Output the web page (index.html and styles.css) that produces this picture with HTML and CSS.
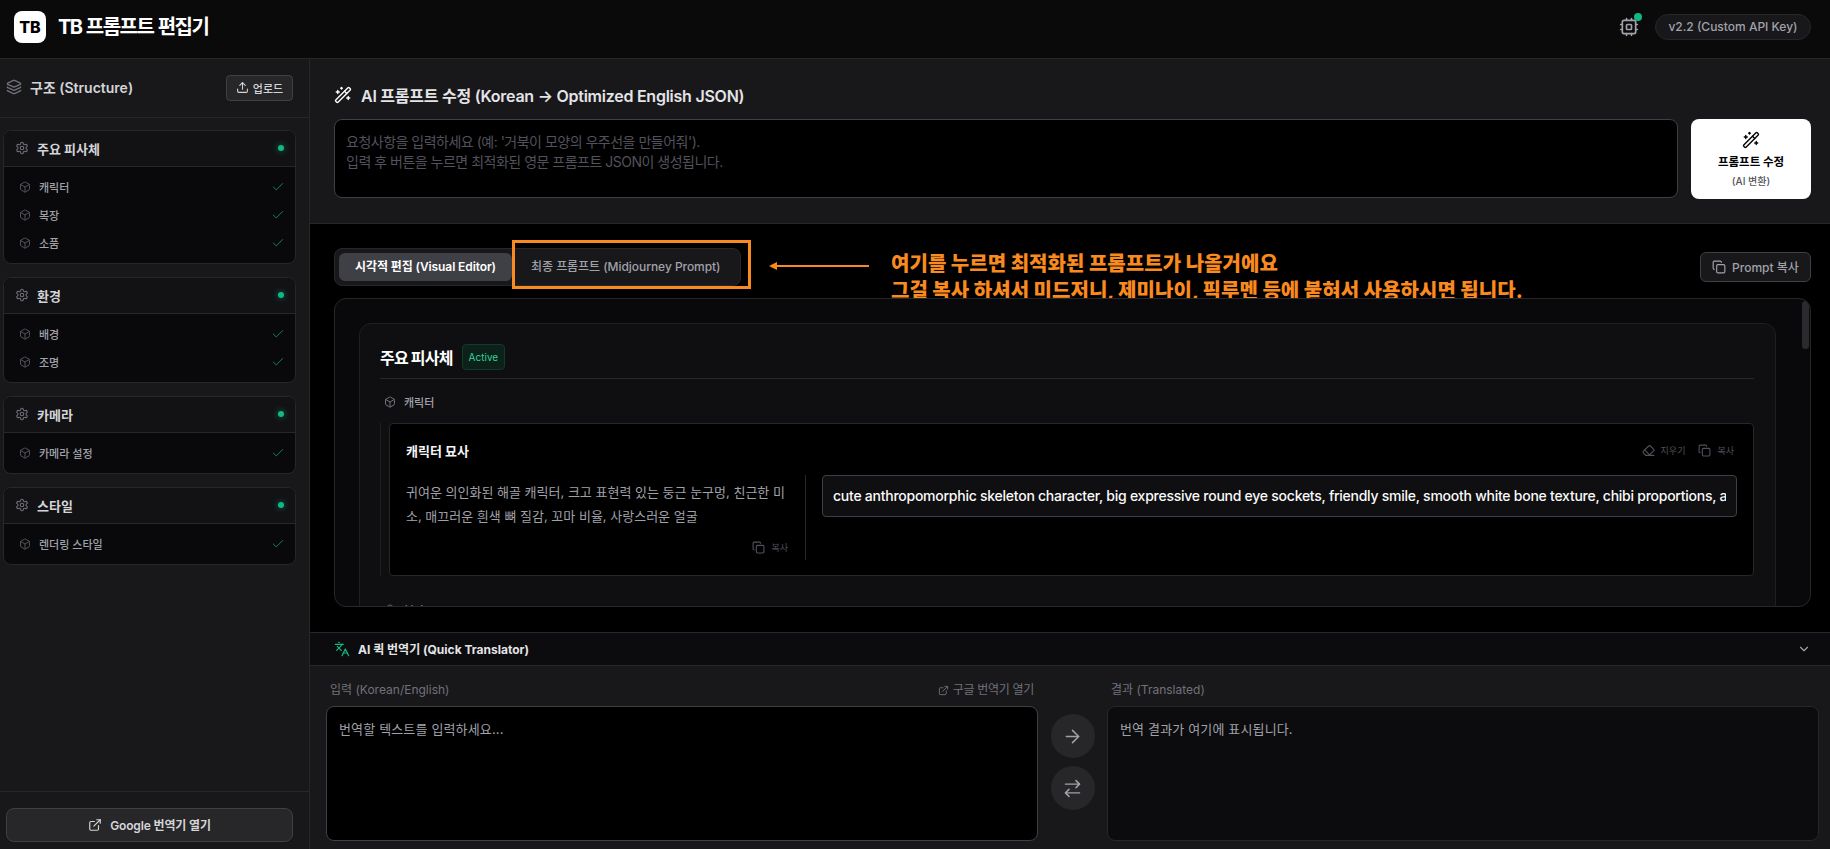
FILE: index.html
```html
<!DOCTYPE html>
<html lang="ko">
<head>
  <meta charset="UTF-8" />
  <title>TB 프롬프트 편집기</title>
  <link rel="stylesheet" href="styles.css">
</head>
<body>

  <!-- icon sprite -->
  <svg class="sprite" xmlns="http://www.w3.org/2000/svg">
    <symbol id="i-layers" viewBox="0 0 24 24"><path d="M12.83 2.18a2 2 0 0 0-1.66 0L2.6 6.08a1 1 0 0 0 0 1.83l8.58 3.91a2 2 0 0 0 1.66 0l8.58-3.9a1 1 0 0 0 0-1.83z"/><path d="M2 12a1 1 0 0 0 .58.91l8.6 3.91a2 2 0 0 0 1.65 0l8.58-3.9A1 1 0 0 0 22 12"/><path d="M2 17a1 1 0 0 0 .58.91l8.6 3.91a2 2 0 0 0 1.65 0l8.58-3.9A1 1 0 0 0 22 17"/></symbol>
    <symbol id="i-upload" viewBox="0 0 24 24"><path d="M21 15v4a2 2 0 0 1-2 2H5a2 2 0 0 1-2-2v-4"/><path d="M17 8l-5-5-5 5"/><path d="M12 3v12"/></symbol>
    <symbol id="i-cog" viewBox="0 0 24 24"><path d="M12.22 2h-.44a2 2 0 0 0-2 2v.18a2 2 0 0 1-1 1.73l-.43.25a2 2 0 0 1-2 0l-.15-.08a2 2 0 0 0-2.73.73l-.22.38a2 2 0 0 0 .73 2.73l.15.1a2 2 0 0 1 1 1.72v.51a2 2 0 0 1-1 1.74l-.15.09a2 2 0 0 0-.73 2.73l.22.38a2 2 0 0 0 2.73.73l.15-.08a2 2 0 0 1 2 0l.43.25a2 2 0 0 1 1 1.73V20a2 2 0 0 0 2 2h.44a2 2 0 0 0 2-2v-.18a2 2 0 0 1 1-1.73l.43-.25a2 2 0 0 1 2 0l.15.08a2 2 0 0 0 2.73-.73l.22-.39a2 2 0 0 0-.73-2.73l-.15-.08a2 2 0 0 1-1-1.74v-.5a2 2 0 0 1 1-1.74l.15-.09a2 2 0 0 0 .73-2.73l-.22-.38a2 2 0 0 0-2.73-.73l-.15.08a2 2 0 0 1-2 0l-.43-.25a2 2 0 0 1-1-1.73V4a2 2 0 0 0-2-2z"/><circle cx="12" cy="12" r="3"/></symbol>
    <symbol id="i-box" viewBox="0 0 24 24"><path d="M21 8a2 2 0 0 0-1-1.73l-7-4a2 2 0 0 0-2 0l-7 4A2 2 0 0 0 3 8v8a2 2 0 0 0 1 1.73l7 4a2 2 0 0 0 2 0l7-4A2 2 0 0 0 21 16Z"/><path d="m3.3 7 8.7 5 8.7-5"/><path d="M12 22V12"/></symbol>
    <symbol id="i-check" viewBox="0 0 24 24"><path d="M20 6 9 17l-5-5"/></symbol>
    <symbol id="i-wand" viewBox="0 0 24 24"><path d="m21.64 3.64-1.28-1.28a1.21 1.21 0 0 0-1.72 0L2.36 18.64a1.21 1.21 0 0 0 0 1.72l1.28 1.28a1.2 1.2 0 0 0 1.72 0L21.64 5.36a1.2 1.2 0 0 0 0-1.72"/><path d="m14 7 3 3"/><path d="M5 6v4"/><path d="M19 14v4"/><path d="M10 2v2"/><path d="M7 8H3"/><path d="M21 16h-4"/><path d="M11 3H9"/></symbol>
    <symbol id="i-copy" viewBox="0 0 24 24"><rect x="8" y="8" width="14" height="14" rx="2"/><path d="M4 16c-1.1 0-2-.9-2-2V4c0-1.1.9-2 2-2h10c1.1 0 2 .9 2 2"/></symbol>
    <symbol id="i-eraser" viewBox="0 0 24 24"><path d="m7 21-4.3-4.3c-1-1-1-2.5 0-3.4l9.6-9.6c1-1 2.5-1 3.4 0l5.6 5.6c1 1 1 2.5 0 3.4L13 21"/><path d="M22 21H7"/><path d="m5 11 9 9"/></symbol>
    <symbol id="i-lang" viewBox="0 0 24 24"><path d="m5 8 6 6"/><path d="m4 14 6-6 2-3"/><path d="M2 5h12"/><path d="M7 2h1"/><path d="m22 22-5-10-5 10"/><path d="M14 18h6"/></symbol>
    <symbol id="i-link" viewBox="0 0 24 24"><path d="M15 3h6v6"/><path d="M10 14 21 3"/><path d="M18 13v6a2 2 0 0 1-2 2H5a2 2 0 0 1-2-2V8a2 2 0 0 1 2-2h6"/></symbol>
    <symbol id="i-right" viewBox="0 0 24 24"><path d="M5 12h14"/><path d="m12 5 7 7-7 7"/></symbol>
    <symbol id="i-swap" viewBox="0 0 24 24"><path d="m16 3 4 4-4 4"/><path d="M20 7H4"/><path d="m8 21-4-4 4-4"/><path d="M4 17h16"/></symbol>
    <symbol id="i-down" viewBox="0 0 24 24"><path d="m6 9 6 6 6-6"/></symbol>
    <symbol id="i-cpu" viewBox="0 0 24 24"><rect x="4" y="4" width="16" height="16" rx="2"/><rect x="9" y="9" width="6" height="6" rx="1"/><path d="M15 2v2M15 20v2M2 15h2M2 9h2M20 15h2M20 9h2M9 2v2M9 20v2"/></symbol>
  </svg>

  <header class="topbar">
    <div class="brand">
      <div class="logo">TB</div>
      <h1>TB 프롬프트 편집기</h1>
    </div>
    <div class="topbar-right">
      <div class="chip-status">
        <svg class="ic ic-cpu"><use href="#i-cpu"/></svg>
        <span class="chip-dot"></span>
      </div>
      <div class="version">v2.2 (Custom API Key)</div>
    </div>
  </header>

  <div class="app">
    <aside class="sidebar">
      <div class="side-head">
        <div class="side-title">
          <svg class="ic ic-layers"><use href="#i-layers"/></svg>
          <span>구조 (Structure)</span>
        </div>
        <button class="upload-btn"><svg class="ic ic-13"><use href="#i-upload"/></svg>업로드</button>
      </div>

      <div class="side-list">
        <div class="group">
          <div class="group-head">
            <svg class="ic ic-cog"><use href="#i-cog"/></svg>
            <span class="group-name">주요 피사체</span>
            <span class="dot"></span>
          </div>
          <div class="group-body">
            <div class="item"><svg class="ic ic-box"><use href="#i-box"/></svg><span>캐릭터</span><svg class="ic ic-check"><use href="#i-check"/></svg></div>
            <div class="item"><svg class="ic ic-box"><use href="#i-box"/></svg><span>복장</span><svg class="ic ic-check"><use href="#i-check"/></svg></div>
            <div class="item"><svg class="ic ic-box"><use href="#i-box"/></svg><span>소품</span><svg class="ic ic-check"><use href="#i-check"/></svg></div>
          </div>
        </div>
        <div class="group">
          <div class="group-head">
            <svg class="ic ic-cog"><use href="#i-cog"/></svg>
            <span class="group-name">환경</span>
            <span class="dot"></span>
          </div>
          <div class="group-body">
            <div class="item"><svg class="ic ic-box"><use href="#i-box"/></svg><span>배경</span><svg class="ic ic-check"><use href="#i-check"/></svg></div>
            <div class="item"><svg class="ic ic-box"><use href="#i-box"/></svg><span>조명</span><svg class="ic ic-check"><use href="#i-check"/></svg></div>
          </div>
        </div>
        <div class="group">
          <div class="group-head">
            <svg class="ic ic-cog"><use href="#i-cog"/></svg>
            <span class="group-name">카메라</span>
            <span class="dot"></span>
          </div>
          <div class="group-body">
            <div class="item"><svg class="ic ic-box"><use href="#i-box"/></svg><span>카메라 설정</span><svg class="ic ic-check"><use href="#i-check"/></svg></div>
          </div>
        </div>
        <div class="group">
          <div class="group-head">
            <svg class="ic ic-cog"><use href="#i-cog"/></svg>
            <span class="group-name">스타일</span>
            <span class="dot"></span>
          </div>
          <div class="group-body">
            <div class="item"><svg class="ic ic-box"><use href="#i-box"/></svg><span>렌더링 스타일</span><svg class="ic ic-check"><use href="#i-check"/></svg></div>
          </div>
        </div>
      </div>

      <div class="side-foot">
        <button class="google-btn"><svg class="ic ic-14"><use href="#i-link"/></svg>Google 번역기 열기</button>
      </div>
    </aside>

    <main class="main">
      <section class="ai-edit">
        <h2 class="ai-title"><svg class="ic ic-wand"><use href="#i-wand"/></svg>AI 프롬프트 수정 (Korean → Optimized English JSON)</h2>
        <div class="ai-row">
          <div class="ai-input">요청사항을 입력하세요 (예: '거북이 모양의 우주선을 만들어줘').<br>입력 후 버튼을 누르면 최적화된 영문 프롬프트 JSON이 생성됩니다.</div>
          <button class="ai-btn">
            <svg class="ic ic-wand-dark"><use href="#i-wand"/></svg>
            <span class="ai-btn-main">프롬프트 수정</span>
            <span class="ai-btn-sub">(AI 변환)</span>
          </button>
        </div>
      </section>

      <section class="editor">
        <div class="tab-row">
          <div class="tabs">
            <div class="tab tab-active">시각적 편집 (Visual Editor)</div>
            <div class="tab">최종 프롬프트 (Midjourney Prompt)</div>
          </div>
          <button class="copy-prompt"><svg class="ic ic-14"><use href="#i-copy"/></svg>Prompt 복사</button>

          <!-- orange annotation drawn over the screen -->
          <div class="note-box"></div>
          <svg class="note-arrow" viewBox="0 0 100 8"><path d="M100 4H6"/><path class="note-head" d="M0 4l8-4v8z"/></svg>
          <div class="note-text">여기를 누르면 최적화된 프롬프트가 나올거에요<br>그걸 복사 하셔서 미드저니, 제미나이, 픽루멘 등에 붙혀서 사용하시면 됩니다.</div>
        </div>

        <div class="panel">
          <div class="scroll-thumb"></div>
          <div class="section">
            <div class="section-head">
              <h3>주요 피사체</h3>
              <span class="badge">Active</span>
            </div>
            <div class="sub-label"><svg class="ic ic-box2"><use href="#i-box"/></svg>캐릭터</div>
            <div class="sub-body">
              <div class="field">
                <div class="field-head">
                  <h4>캐릭터 묘사</h4>
                  <div class="field-actions">
                    <span class="act"><svg class="ic ic-13"><use href="#i-eraser"/></svg>지우기</span>
                    <span class="act"><svg class="ic ic-13"><use href="#i-copy"/></svg>복사</span>
                  </div>
                </div>
                <div class="field-cols">
                  <div class="field-ko">
                    <p>귀여운 의인화된 해골 캐릭터, 크고 표현력 있는 둥근 눈구멍, 친근한 미소, 매끄러운 흰색 뼈 질감, 꼬마 비율, 사랑스러운 얼굴</p>
                    <span class="act act-right"><svg class="ic ic-13"><use href="#i-copy"/></svg>복사</span>
                  </div>
                  <div class="field-en">
                    <div class="en-input"><div class="en-text">cute anthropomorphic skeleton character, big expressive round eye sockets, friendly smile, smooth white bone texture, chibi proportions, adorable face</div></div>
                  </div>
                </div>
              </div>
            </div>
            <div class="sub-label"><svg class="ic ic-box2"><use href="#i-box"/></svg>복장</div>
          </div>
        </div>
      </section>

      <section class="translator">
        <div class="tr-bar">
          <svg class="ic ic-lang"><use href="#i-lang"/></svg>
          <span class="tr-title">AI 퀵 번역기 (Quick Translator)</span>
          <svg class="ic ic-down"><use href="#i-down"/></svg>
        </div>
        <div class="tr-body">
          <div class="tr-col">
            <div class="tr-label">
              <span>입력 (Korean/English)</span>
              <span class="tr-link"><svg class="ic ic-11"><use href="#i-link"/></svg>구글 번역기 열기</span>
            </div>
            <div class="tr-box tr-input">번역할 텍스트를 입력하세요...</div>
          </div>
          <div class="tr-btns">
            <div class="round"><svg class="ic ic-21"><use href="#i-right"/></svg></div>
            <div class="round"><svg class="ic ic-21"><use href="#i-swap"/></svg></div>
          </div>
          <div class="tr-col">
            <div class="tr-label"><span>결과 (Translated)</span></div>
            <div class="tr-box tr-output">번역 결과가 여기에 표시됩니다.</div>
          </div>
        </div>
      </section>
    </main>
  </div>

</body>
</html>
```

FILE: styles.css
```css
* {
  box-sizing: border-box;
}

html, body {
  height: 100%;
}

body {
  margin: 0;
  font-family: Inter, "Noto Sans CJK KR", sans-serif;
  background: #000;
  color: #e4e4e7;
  display: flex;
  flex-direction: column;
  overflow: hidden;
}

h1, h2, h3, h4, p {
  margin: 0;
}

button {
  font-family: inherit;
  cursor: pointer;
}

.sprite {
  display: none;
}

.ic {
  width: 16px;
  height: 16px;
  fill: none;
  stroke: currentColor;
  stroke-width: 2;
  stroke-linecap: round;
  stroke-linejoin: round;
  flex-shrink: 0;
}

.ic-11 { width: 11px; height: 11px; }
.ic-13 { width: 13px; height: 13px; }
.ic-14 { width: 14px; height: 14px; }
.ic-21 { width: 21px; height: 21px; stroke-width: 1.7; }

/* top bar */
.topbar {
  height: 59px;
  flex-shrink: 0;
  background: #0a0a0b;
  border-bottom: 1px solid #27272a;
  display: flex;
  align-items: center;
  justify-content: space-between;
  padding: 0 19px 5px 14px;
}

.brand {
  display: flex;
  align-items: center;
  gap: 12px;
}

.logo {
  width: 32px;
  height: 32px;
  background: #fff;
  color: #000;
  border-radius: 8px;
  font-size: 16px;
  font-weight: 800;
  display: flex;
  align-items: center;
  justify-content: center;
}

.brand h1 {
  font-size: 20px;
  line-height: 28px;
  font-weight: 700;
  color: #fff;
  letter-spacing: -1.5px;
  word-spacing: 1px;
}

.topbar-right {
  display: flex;
  align-items: center;
  gap: 16px;
}

.chip-status {
  position: relative;
  width: 20px;
  height: 20px;
  color: #a1a1aa;
}

.ic-cpu {
  width: 20px;
  height: 20px;
  stroke-width: 2;
}

.chip-dot {
  position: absolute;
  top: -4px;
  right: -3px;
  width: 8px;
  height: 8px;
  border-radius: 50%;
  background: #10b981;
}

.version {
  height: 26px;
  padding: 0 12.5px;
  border: 1px solid #27272a;
  border-radius: 13px;
  background: #18181b;
  color: #a1a1aa;
  font-size: 12px;
  font-weight: 500;
  line-height: 24px;
}

.app {
  flex: 1;
  display: flex;
  min-height: 0;
}

/* sidebar */
.sidebar {
  width: 310px;
  flex-shrink: 0;
  background: #18181b;
  border-right: 1px solid #27272a;
  display: flex;
  flex-direction: column;
}

.side-head {
  height: 59px;
  flex-shrink: 0;
  border-bottom: 1px solid #27272a;
  display: flex;
  align-items: center;
  justify-content: space-between;
  padding: 0 16px 0 6px;
}

.side-title {
  display: flex;
  align-items: center;
  gap: 8px;
  padding-bottom: 2px;
  font-size: 14px;
  font-weight: 600;
  color: #d4d4d8;
}

.ic-layers {
  width: 16px;
  height: 16px;
  color: #71717a;
}

.upload-btn {
  width: 67px;
  height: 26px;
  padding: 0 0 1px;
  border: 1px solid #3f3f46;
  border-radius: 4px;
  background: #27272a;
  color: #d4d4d8;
  font-size: 11px;
  font-weight: 500;
  display: flex;
  align-items: center;
  justify-content: center;
  gap: 4px;
}

.side-list {
  flex: 1;
  padding: 12px 13px 0 3px;
  display: flex;
  flex-direction: column;
  gap: 13px;
}

.group {
  background: #09090b;
  border: 1px solid #27272a;
  border-radius: 8px;
  overflow: hidden;
}

.group-head {
  height: 36px;
  background: #121215;
  border-bottom: 1px solid #27272a;
  display: flex;
  align-items: center;
  padding: 0 11px 1px 11px;
  gap: 8px;
}

.ic-cog {
  width: 14px;
  height: 14px;
  color: #71717a;
  stroke-width: 1.8;
}

.group-name {
  flex: 1;
  font-size: 13px;
  font-weight: 700;
  color: #d4d4d8;
}

.dot {
  width: 6px;
  height: 6px;
  border-radius: 50%;
  background: #10b981;
  box-shadow: 0 0 6px rgba(16, 185, 129, 0.6);
}

.group-body {
  padding: 6px 0;
}

.item {
  height: 28px;
  display: flex;
  align-items: center;
  padding: 0 10px 0 15px;
  gap: 8px;
  font-size: 11px;
  font-weight: 500;
  color: #a1a1aa;
}

.item span {
  flex: 1;
}

.ic-box {
  width: 12px;
  height: 12px;
  color: #52525b;
}

.ic-check {
  width: 14px;
  height: 14px;
  color: #10b981;
  stroke-width: 1.2;
}

.side-foot {
  height: 58px;
  flex-shrink: 0;
  border-top: 1px solid #27272a;
  padding: 16px 16px 0 6px;
}

.google-btn {
  width: 100%;
  height: 34px;
  padding: 0 0 1px;
  border: 1px solid #3f3f46;
  border-radius: 8px;
  background: #27272a;
  color: #d4d4d8;
  font-size: 12px;
  font-weight: 600;
  letter-spacing: -0.15px;
  display: flex;
  align-items: center;
  justify-content: center;
  gap: 8px;
}

/* main column */
.main {
  flex: 1;
  min-width: 0;
  display: flex;
  flex-direction: column;
}

.ai-edit {
  height: 165px;
  flex-shrink: 0;
  background: #18181b;
  border-bottom: 1px solid #27272a;
  padding: 24px 19px 0 24px;
}

.ai-title {
  display: flex;
  align-items: center;
  gap: 9px;
  height: 23px;
  font-size: 16px;
  font-weight: 600;
  letter-spacing: -0.25px;
  color: #e4e4e7;
  margin-bottom: 13px;
}

.ic-wand {
  width: 18px;
  height: 18px;
  color: #fff;
  stroke-width: 1.8;
}

.ai-row {
  display: flex;
  gap: 13px;
}

.ai-input {
  flex: 1;
  height: 79px;
  background: #000;
  border: 1px solid #3f3f46;
  border-radius: 8px;
  padding: 12px 11px;
  font-size: 14px;
  letter-spacing: -0.5px;
  line-height: 20px;
  color: #52525b;
}

.ai-btn {
  width: 120px;
  height: 80px;
  border: 0;
  border-radius: 8px;
  background: #fff;
  color: #000;
  padding: 0;
  display: flex;
  flex-direction: column;
  align-items: center;
  justify-content: center;
}

.ic-wand-dark {
  width: 18px;
  height: 18px;
  stroke-width: 1.8;
  margin-bottom: 5px;
}

.ai-btn-main {
  font-size: 11.5px;
  line-height: 16px;
  font-weight: 700;
}

.ai-btn-sub {
  font-size: 10px;
  line-height: 14px;
  margin-top: 4px;
  font-weight: 500;
  color: #52525b;
}

/* editor */
.editor {
  flex: 1;
  min-height: 0;
  padding: 24px 19px 25px 24px;
  display: flex;
  flex-direction: column;
  background: #000;
}

.tab-row {
  position: relative;
  display: flex;
  align-items: center;
  justify-content: space-between;
  margin-bottom: 12px;
  flex-shrink: 0;
}

.tabs {
  display: flex;
  height: 38px;
  padding: 4px;
  background: #18181b;
  border: 1px solid #27272a;
  border-radius: 8px;
}

.tab {
  height: 28px;
  padding: 0 16px 0 19px;
  border-radius: 6px;
  font-size: 12px;
  font-weight: 500;
  letter-spacing: -0.05px;
  line-height: 28px;
  color: #a1a1aa;
}

.tab-active {
  width: 173px;
  padding: 0;
  text-align: center;
  background: #3f3f46;
  color: #fff;
  font-weight: 600;
  letter-spacing: -0.1px;
}

.copy-prompt {
  height: 30px;
  width: 111px;
  padding: 0 0 1px;
  border: 1px solid #3f3f46;
  border-radius: 6px;
  background: #18181b;
  color: #a1a1aa;
  font-size: 12px;
  font-weight: 500;
  display: flex;
  align-items: center;
  justify-content: center;
  gap: 6px;
}

.note-box {
  position: absolute;
  left: 178px;
  top: -8px;
  width: 239px;
  height: 49px;
  border: 3px solid #f98a1f;
}

.note-arrow {
  position: absolute;
  left: 435px;
  top: 14px;
  width: 100px;
  height: 8px;
  fill: none;
  stroke: #f98a1f;
  stroke-width: 2;
}

.note-head {
  fill: #f98a1f;
  stroke: none;
}

.note-text {
  position: absolute;
  left: 557px;
  top: 3px;
  font-size: 20px;
  line-height: 27px;
  font-weight: 800;
  letter-spacing: 0.06px;
  color: #f98a1f;
  white-space: nowrap;
}

.panel {
  position: relative;
  z-index: 1;
  flex: 1;
  min-height: 0;
  overflow: hidden;
  background: #09090b;
  border: 1px solid #27272a;
  border-radius: 12px;
  padding: 24px 34px 0 24px;
}

.scroll-thumb {
  position: absolute;
  top: 2px;
  right: 1px;
  width: 7px;
  height: 48px;
  border-radius: 4px;
  background: #2b2b2f;
}

.section {
  background: #0f0f11;
  border: 1px solid #1f1f23;
  border-radius: 12px;
  padding: 20px 21px 20px 20px;
}

.section-head {
  display: flex;
  align-items: center;
  gap: 9px;
  height: 35px;
  padding-bottom: 8px;
  border-bottom: 1px solid #27272a;
  margin-bottom: 15px;
}

.section-head h3 {
  font-size: 16px;
  font-weight: 700;
  letter-spacing: -0.8px;
  color: #fff;
}

.badge {
  height: 26px;
  padding: 0 6px;
  border: 1px solid #0f3a2c;
  border-radius: 4px;
  background: #0b2119;
  color: #34d399;
  font-size: 10px;
  line-height: 24px;
}

.sub-label {
  display: flex;
  align-items: center;
  gap: 8px;
  height: 16px;
  padding-left: 4px;
  font-size: 11px;
  font-weight: 500;
  color: #a1a1aa;
}

.ic-box2 {
  width: 12px;
  height: 12px;
  color: #71717a;
}

.sub-body {
  margin: 13px 0 26px;
  padding-left: 8px;
  border-left: 1px solid #1f1f23;
}

.field {
  background: #000;
  border: 1px solid #27272a;
  border-radius: 4px;
  height: 153px;
  padding: 16px;
}

.field-head {
  display: flex;
  align-items: center;
  justify-content: space-between;
  height: 20px;
  margin-bottom: 15px;
}

.field-head h4 {
  font-size: 13px;
  font-weight: 700;
  color: #f4f4f5;
}

.field-actions {
  display: flex;
  gap: 13px;
  padding-right: 3px;
}

.act {
  display: inline-flex;
  align-items: center;
  gap: 6px;
  font-size: 9px;
  color: #52525b;
}

.field-cols {
  display: flex;
}

.field-ko {
  width: 400px;
  height: 85px;
  padding-right: 17px;
  border-right: 1px solid #27272a;
  display: flex;
  flex-direction: column;
}

.field-ko p {
  font-size: 13px;
  line-height: 24px;
  color: #a1a1aa;
  height: 61px;
  margin-top: 5px;
}

.act-right {
  align-self: flex-end;
  margin-top: auto;
  margin-bottom: 6px;
}

.field-en {
  flex: 1;
  min-width: 0;
  padding-left: 16px;
}

.en-input {
  height: 42px;
  padding: 0 10px;
  background: #0f0f11;
  border: 1px solid #3f3f46;
  border-radius: 4px;
}

.en-text {
  font-size: 14px;
  font-weight: 500;
  letter-spacing: -0.25px;
  line-height: 40px;
  color: #fafafa;
  white-space: nowrap;
  overflow: hidden;
}

/* translator */
.translator {
  flex-shrink: 0;
  height: 217px;
  display: flex;
  flex-direction: column;
  background: #18181b;
}

.tr-bar {
  height: 34px;
  flex-shrink: 0;
  background: #0c0c0e;
  border-top: 1px solid #27272a;
  border-bottom: 1px solid #27272a;
  display: flex;
  align-items: center;
  padding: 0 19px 1px 24px;
  gap: 8px;
}

.ic-lang {
  width: 16px;
  height: 16px;
  color: #10b981;
  stroke-width: 1.8;
}

.tr-title {
  flex: 1;
  font-size: 12px;
  font-weight: 700;
  color: #e4e4e7;
}

.ic-down {
  width: 14px;
  height: 14px;
  color: #a1a1aa;
}

.tr-body {
  flex: 1;
  min-height: 0;
  display: flex;
  padding: 17px 11px 8px 16px;
}

.tr-col {
  flex: 1;
  min-width: 0;
  display: flex;
  flex-direction: column;
}

.tr-label {
  height: 23px;
  padding: 0 4px;
  display: flex;
  justify-content: space-between;
  font-size: 12px;
  line-height: 14px;
  color: #71717a;
}

.tr-link {
  display: inline-flex;
  align-items: center;
  height: 14px;
  gap: 4px;
  letter-spacing: -0.3px;
}

.tr-box {
  flex: 1;
  border: 1px solid #3f3f46;
  border-radius: 8px;
  padding: 12px;
  font-size: 13px;
  letter-spacing: 0.15px;
  line-height: 20px;
  color: #a1a1aa;
}

.tr-input {
  background: #000;
}

.tr-output {
  background: #0c0c0e;
  border-color: #27272a;
}

.tr-btns {
  width: 69px;
  flex-shrink: 0;
  display: flex;
  flex-direction: column;
  align-items: center;
  justify-content: center;
  gap: 8px;
}

.round {
  width: 44px;
  height: 44px;
  border-radius: 50%;
  background: #27272a;
  color: #a1a1aa;
  display: flex;
  align-items: center;
  justify-content: center;
}
```
